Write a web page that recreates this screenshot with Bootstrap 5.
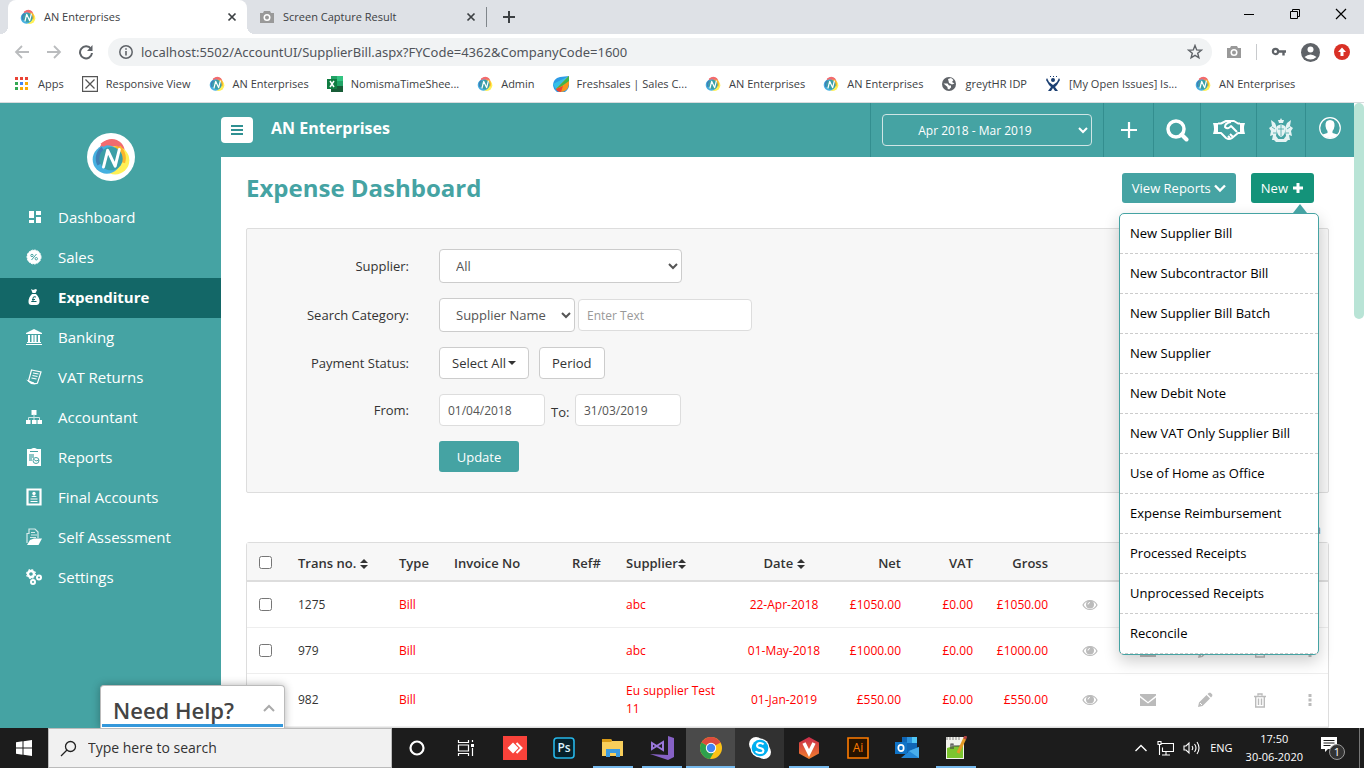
<!DOCTYPE html>
<html lang="en">
<head>
<meta charset="utf-8">
<meta name="viewport" content="width=device-width, initial-scale=1">
<title>AN Enterprises</title>
<link rel="stylesheet" href="https://cdn.jsdelivr.net/npm/bootstrap@5.3.0/dist/css/bootstrap.min.css">
<style>
:root{--teal:#45a3a3;--teal-dark:#136767;--line:#ddd}
body{font:13px/18px "Open Sans","Noto Sans",sans-serif;color:#333;background:#fff}
svg{display:block;flex:none}
.chrome-ui,.taskbar{font-size:11px;color:#3c4043}
.bare{background:none;border:0;padding:0;color:inherit}
/* browser window */
.tabstrip{height:34px;background:#dee1e6;padding-left:8px}
.tab{position:relative;width:239px;height:34px;padding:0 10px 0 12px;gap:8px}
.tab.current{background:#fff;border-radius:8px 8px 0 0}
.tab.current::before,.tab.current::after{content:"";position:absolute;bottom:0;width:8px;height:8px}
.tab.current::before{left:-8px;background:radial-gradient(circle at 0 0,transparent 8px,#fff 8px)}
.tab.current::after{right:-8px;background:radial-gradient(circle at 100% 0,transparent 8px,#fff 8px)}
.tabsep{width:1px;height:20px;background:#80868b}
.win-btns{gap:34px;padding:0 17px 6px 0}
.toolbar{height:36px;padding:0 14px;gap:14px}
.address{height:28px;background:#f1f3f4;border-radius:14px;padding:0 9px 0 11px;gap:8px}
.address input{font-family:"Noto Sans","Open Sans",sans-serif;font-size:13px;color:#50545a;outline:0}
.bookmarks{height:33px;padding:0 14px 4px;gap:18px;border-bottom:1px solid #d9dbde}
.bookmarks a{color:#3c4043;text-decoration:none;gap:8px;white-space:nowrap}
/* application */
.sidebar{width:221px;background:var(--teal)}
.sidebar .brand{margin:30px auto 17px;width:48px}
.sidebar a{height:40px;padding:0 0 2px 26px;gap:16px;color:#fff;font-size:15px;text-decoration:none}
.sidebar a.current{background:var(--teal-dark);font-weight:700}
.topbar{height:54px;background:var(--teal);color:#fff}
.topbar .company{font-size:16px;font-weight:700;padding:0 0 4px 18px;line-height:22px}
.menu-btn{width:32px;height:26px;background:#fff;border-radius:4px}
.topcell{border-left:1px solid #338e8f;align-self:stretch}
.topcell .bare{width:100%;height:100%}
.year{width:210px;height:32px;margin:0 11px;border:1px solid #cfe5e5;border-radius:4px;background:transparent;color:#fff;font-size:12px;text-align:center;padding:0 12px 0 0}
.year option{color:#333}
.scroller{width:10px;background:#fff}
.scroller div{height:216px;background:#b9e4d6;border-radius:5px}
.page{padding:16px 25px 0}
h1{font-size:24px;line-height:30px;font-weight:700;color:var(--teal);margin:0}
.act{height:30px;border:0;border-radius:3px;background:var(--teal);color:#fff;font-size:13px;padding:0 10px;gap:3px}
.act.green{background:#14937a;gap:4px}
.new-menu{width:200px;top:40px;right:-5px;padding:0;font-size:13px;border:1px solid var(--teal);border-radius:5px;box-shadow:0 6px 16px rgba(0,0,0,.2)}
.new-menu::before{content:"";position:absolute;right:11px;top:-10px;border:7px solid transparent;border-top-width:0;border-bottom:9px solid var(--teal)}
.new-menu a{display:block;height:40px;line-height:39px;padding:0 10px;color:#000;text-decoration:none;border-bottom:1px dashed #ccc}
.filter{margin-top:25px;padding:20px 0;background:#f7f7f7;border:1px solid var(--line);border-radius:2px;display:grid;gap:15px}
.filter .lab{width:162px;margin-right:30px;text-align:right}
.filter .to{width:30px;padding:4px 0 0 6px}
.ctl{height:32px;border:1px solid var(--line);border-radius:4px;background:#fff;color:#555;font-size:12px;padding:0 8px}
.ctl::placeholder{color:#999}
select.ctl{height:34px;border-color:#ccc;padding:0 0 0 12px;font-size:13px}
button.ctl{border-color:#ccc;color:#333;font-size:13px;padding:0 12px}
.caret-sm{border:4px solid transparent;border-top-color:#333;border-bottom:0;margin-left:2px}
.date{width:106px}
.above{height:49px;padding:28px 8px 0 0;color:#888;font-size:12px}
.bills{table-layout:fixed;margin:0;border:1px solid var(--line);font-size:12px;border-collapse:separate;border-spacing:0;border-radius:3px 3px 0 0}
.bills th,.bills td{padding:0 10px;vertical-align:middle;border-bottom:1px solid #eee;background:transparent;color:#f00;line-height:18px}
.bills th{height:39px;padding-top:2px;font-weight:600;font-size:13px;background:#f7f7f7;color:#333;border-bottom:2px solid var(--line);white-space:nowrap}
.bills td{height:46px}
.bills .tall td{height:53px}
.bills td:nth-child(2){color:#333}
.bills td svg{margin:auto;color:#bbb}
.bills input{width:13px;height:13px;margin:0 0 0 2px;display:block}
.bills .ic{padding:0}
.bills .ic:last-child{padding-left:8px}
.sort{display:inline-block;vertical-align:-1px}
/* help tab over the page's lower edge */
.help{position:absolute;left:100px;bottom:0;width:185px;height:43px;background:#fff;border:1px solid #bbb;border-bottom:0;border-radius:4px 4px 0 0;box-shadow:0 0 8px rgba(0,0,0,.3);padding:0 1px 1px}
.help button{width:100%;height:41px;border-bottom:3px solid #3498db;padding:9px 8px 0 11px;font-size:22px;line-height:26px;font-weight:600;color:#444}
/* taskbar */
.taskbar{height:40px;background:#1c1c1c;color:#fff}
.start{width:48px}
.finder{width:344px;background:#f1f1f1;border:1px solid #bbb;padding:0 11px;gap:11px}
.finder input{color:#333;font-size:14px;outline:0}
.finder input::placeholder{color:#333;opacity:1}
.app{width:49px;height:40px}
.app.open{background:linear-gradient(#76b9ed,#76b9ed) center bottom/40px 2px no-repeat}
.app.lit{background:linear-gradient(#76b9ed,#76b9ed) center bottom/49px 2px no-repeat #4a4a4a}
.app.dim{background:#313131}
.tray{gap:9px;padding-right:4px}
.clock{line-height:18px;text-align:center}
</style>
</head>
<body class="vh-100 d-flex flex-column overflow-hidden">

<svg width="0" height="0" class="position-absolute" aria-hidden="true">
<defs>
<symbol id="n" viewBox="0 0 48 48"><circle cx="25" cy="18" r="15.500" fill="#f26b6f"/><circle cx="29" cy="28" r="17" fill="#fff056"/><circle cx="19" cy="27" r="17" fill="#45b0e0"/><path d="M30 10.500a17 17 0 0 1 8 20" fill="none" stroke="#fbb62c" stroke-width="6"/><path d="M13 10q10-8 22 0" fill="none" stroke="#f26b6f" stroke-width="5"/><path d="M14 14a15 15 0 0 0-4 19" fill="none" stroke="#3f7fb5" stroke-width="5"/><circle cx="24" cy="26" r="14" fill="#3b9fa6"/><path d="M15 36l5-20 9 19 5-20" fill="none" stroke="#fff" stroke-width="3.600" stroke-linejoin="round" stroke-linecap="round"/></symbol>
<symbol id="cam" viewBox="0 0 16 16"><path d="M1 4h3l1-2h6l1 2h3v10H1z" fill="#999"/><circle cx="8" cy="8.500" r="3.500" fill="#fff"/><circle cx="8" cy="8.500" r="2" fill="#999"/></symbol>
<symbol id="x" viewBox="0 0 10 10"><path d="M1.500 1.500l7 7m0-7l-7 7" stroke="#3c4043" stroke-width="1.700"/></symbol>
<symbol id="chev" viewBox="0 0 12 12"><path d="M1 3.500l5 5 5-5" fill="none" stroke="currentColor" stroke-width="2.400"/></symbol>
<symbol id="eye" viewBox="0 0 16 12"><path d="M1 6c3-6 11-6 14 0-3 6-11 6-14 0z" fill="none" stroke="currentColor" stroke-width="1.200"/><circle cx="8" cy="5.500" r="4" fill="currentColor"/><path d="M6 5.500q0-2 2-2" fill="none" stroke="#fff"/></symbol>
<symbol id="mail" viewBox="0 0 16 14"><path d="M0 1h16v1.500L8 9 0 2.500zM0 4.500l8 6 8-6V13H0z" fill="currentColor"/></symbol>
<symbol id="pen" viewBox="0 0 16 16"><path d="M1 15l1-4.500 7.500-7.500 3.500 3.500L5.500 14zM10.500 2L12 .7h1.500L15.300 2.500V4L14 5.500z" fill="currentColor"/><path d="M3 11l2 2" stroke="#fff"/></symbol>
<symbol id="bin" viewBox="0 0 12 15"><path d="M4 2.500V1h4v1.500M0 3.500h12" fill="none" stroke="currentColor" stroke-width="1.400"/><path d="M1.700 4v10h8.600V4M4.500 5.500V12M7.500 5.500V12" fill="none" stroke="currentColor" stroke-width="1.400"/></symbol>
<symbol id="dots" viewBox="0 0 4 14"><path d="M.5 1h3v3h-3zM.5 5.500h3v3h-3zM.5 10h3v3h-3z" fill="currentColor"/></symbol>
<symbol id="ud" viewBox="0 0 8 10"><path d="M4 0l4 4H0zM0 6h8l-4 4z" fill="#333"/></symbol>
</defs>
</svg>

<header class="chrome-ui">
  <div class="tabstrip d-flex align-items-center">
    <div class="tab current d-flex align-items-center"><svg width="16" height="16"><use href="#n"/></svg><span class="flex-grow-1">AN Enterprises</span><button class="bare" aria-label="Close tab"><svg width="10" height="10"><use href="#x"/></svg></button></div>
    <div class="tab d-flex align-items-center"><svg width="16" height="16"><use href="#cam"/></svg><span class="flex-grow-1">Screen Capture Result</span><button class="bare" aria-label="Close tab"><svg width="10" height="10"><use href="#x"/></svg></button></div>
    <span class="tabsep"></span>
    <button class="bare ms-3" aria-label="New tab"><svg width="12" height="12"><path d="M6 0v12M0 6h12" stroke="#3c4043" stroke-width="2"/></svg></button>
    <div class="win-btns d-flex align-items-center ms-auto">
      <button class="bare" aria-label="Minimize"><svg width="12" height="12"><path d="M1 6.500h10" stroke="#000"/></svg></button>
      <button class="bare" aria-label="Restore"><svg width="12" height="12"><path d="M1.500 3.500h7v7h-7zM3.500 3V1.500h7v7H9" fill="none" stroke="#000"/></svg></button>
      <button class="bare" aria-label="Close"><svg width="12" height="12"><path d="M1 1l10 10M11 1L1 11" stroke="#000" stroke-width="1.200"/></svg></button>
    </div>
  </div>
  <div class="toolbar d-flex align-items-center">
    <div class="d-flex gap-3">
      <button class="bare" aria-label="Back"><svg width="16" height="16"><path d="M15 8H2m6-6L2 8l6 6" fill="none" stroke="#babcbe" stroke-width="1.800"/></svg></button>
      <button class="bare" aria-label="Forward"><svg width="16" height="16"><path d="M1 8h13M8 2l6 6-6 6" fill="none" stroke="#babcbe" stroke-width="1.800"/></svg></button>
      <button class="bare" aria-label="Reload"><svg width="16" height="16"><path d="M13 5a6 6 0 1 0 1 4" fill="none" stroke="#5f6368" stroke-width="2"/><path d="M14.500 1v6H9z" fill="#5f6368"/></svg></button>
    </div>
    <div class="address d-flex align-items-center flex-grow-1">
      <svg width="14" height="14"><circle cx="7" cy="7" r="6.200" fill="none" stroke="#5f6368" stroke-width="1.500"/><path d="M7 6v4.500M7 3.200v1.600" stroke="#5f6368" stroke-width="1.600"/></svg>
      <input class="bare flex-grow-1" aria-label="Address" value="localhost:5502/AccountUI/SupplierBill.aspx?FYCode=4362&amp;CompanyCode=1600">
      <svg width="16" height="16"><path d="M8 1.500l1.700 4.400 4.600.3-3.600 3 1.200 4.600L8 11.300l-3.900 2.500 1.200-4.600-3.600-3 4.600-.3z" fill="none" stroke="#5f6368" stroke-width="1.400"/></svg>
    </div>
    <svg width="16" height="16"><use href="#cam"/></svg>
    <svg width="1" height="16"><path d="M.5 0v16" stroke="#c8cacd" stroke-width="1"/></svg>
    <svg width="16" height="16"><circle cx="4.500" cy="7.500" r="2.600" fill="none" stroke="#5f6368" stroke-width="2.200"/><path d="M7 7.500h8M12.500 8v3.500" stroke="#5f6368" stroke-width="2.400"/></svg>
    <button class="bare" aria-label="Profile"><svg width="19" height="19"><circle cx="9.500" cy="9.500" r="9.500" fill="#5f6368"/><circle cx="9.500" cy="6.500" r="3" fill="#fff"/><path d="M3.500 14q6-5 12 0-6 5-12 0z" fill="#fff"/></svg></button>
    <button class="bare" aria-label="Update browser"><svg width="16" height="16"><circle cx="8" cy="8" r="8" fill="#d93025"/><path d="M8 3.500L12 8H9.500v4h-3V8H4z" fill="#fff"/></svg></button>
  </div>
  <nav class="bookmarks d-flex align-items-center" aria-label="Bookmarks">
    <a href="#" class="d-flex align-items-center"><svg width="16" height="14"><path d="M1 0h3v3H1zM6 0h3v3H6zM11 0h3v3h-3z" fill="#ea4335"/><path d="M1 5h3v3H1zM1 10h3v3H1z" fill="#34a853"/><path d="M6 5h3v3H6z" fill="#4285f4"/><path d="M11 5h3v3h-3zM6 10h3v3H6zM11 10h3v3h-3z" fill="#fbab05"/></svg>Apps</a>
    <a href="#" class="d-flex align-items-center"><svg width="16" height="16"><path d="M.5.500h15v15H.5zM3.500 3.500l9 9m0-9l-9 9" fill="none" stroke="#555" stroke-width="1.300"/></svg>Responsive View</a>
    <a href="#" class="d-flex align-items-center"><svg width="16" height="16"><use href="#n"/></svg>AN Enterprises</a>
    <a href="#" class="d-flex align-items-center"><svg width="16" height="16"><path d="M4 0h12v16H4z" fill="#21a366"/><path d="M10 0h6v5h-6z" fill="#33c481"/><path d="M4 10h12v6H4z" fill="#185c37"/><path d="M0 3h10v10H0z" fill="#107c41"/><path d="M3 5l4 6M7 5l-4 6" stroke="#fff" stroke-width="1.500"/></svg>NomismaTimeShee...</a>
    <a href="#" class="d-flex align-items-center"><svg width="16" height="16"><use href="#n"/></svg>Admin</a>
    <a href="#" class="d-flex align-items-center"><svg width="16" height="16"><path d="M16 0v8a8 8 0 1 1-9-7z" fill="#2e9be6"/><path d="M16 0L3 13l-3-5z" fill="#35c0e8"/><path d="M16 0v8q-1 8-9 8l-4-3z" fill="#f7941d"/><path d="M16 0v5l-7 5-6 3z" fill="#3fb549"/><path d="M3 13l7-3-2 6q-4 0-5-3z" fill="#e43"/></svg>Freshsales | Sales C...</a>
    <a href="#" class="d-flex align-items-center"><svg width="16" height="16"><use href="#n"/></svg>AN Enterprises</a>
    <a href="#" class="d-flex align-items-center"><svg width="16" height="16"><use href="#n"/></svg>AN Enterprises</a>
    <a href="#" class="d-flex align-items-center"><svg width="16" height="16"><circle cx="8" cy="8" r="7" fill="#5f6368"/><path d="M2.500 7.500h4l1.500 2h2v2l-2 2-1.500-1V11zM7 3l3-1 2.500 2-1.500 2 2.500 1.500-2.500 1-3-1.500z" fill="#fff"/></svg>greytHR IDP</a>
    <a href="#" class="d-flex align-items-center"><svg width="16" height="16"><circle cx="8" cy="4" r="2" fill="#1b3f72"/><path d="M2 2l2 4 4 3 4-3 2-4 1 2-3 5-2 2 3 4h-3l-2-3-2 3H3l3-4-2-2-3-5z" fill="#1b3f72"/><path d="M5 .5h1M8 .5h1M11 .5h1" stroke="#1b3f72"/></svg>[My Open Issues] Is...</a>
    <a href="#" class="d-flex align-items-center"><svg width="16" height="16"><use href="#n"/></svg>AN Enterprises</a>
  </nav>
</header>

<div class="d-flex flex-grow-1 overflow-hidden position-relative" style="min-height:0">
  <nav class="sidebar flex-shrink-0" aria-label="Main">
    <svg class="brand" width="48" height="48" viewBox="0 0 48 48"><circle cx="24" cy="24" r="24" fill="#fff"/><svg x="4" y="4" width="40" height="40"><use href="#n"/></svg></svg>
    <a href="#" class="d-flex align-items-center"><svg width="16" height="16"><path d="M3 2h5v7H3zM10 2h5v4h-5zM3 11h5v3H3zM10 8h5v6h-5z" fill="#fff"/></svg>Dashboard</a>
    <a href="#" class="d-flex align-items-center"><svg width="16" height="16"><circle cx="8" cy="8" r="7" fill="#fff" stroke="#fff" stroke-dasharray="2 1"/><path d="M10.500 5l-5 6" stroke="#45a3a3"/><circle cx="6" cy="6.500" r="1.200" fill="none" stroke="#45a3a3"/><circle cx="10.300" cy="9.700" r="1.200" fill="none" stroke="#45a3a3"/></svg>Sales</a>
    <a href="#" class="current d-flex align-items-center" aria-current="page"><svg width="16" height="16"><path d="M5 0l2 1 3-1 1 1-1.500 3h-3zM6 5h4q4 4 3.500 8-.5 3-3 3h-5q-3 0-3-3Q2.500 8 6 5z" fill="#fff"/><path d="M10 8q-3-1-3 1v3.500H5.500h5M6 10.500h3" fill="none" stroke="#136767"/></svg>Expenditure</a>
    <a href="#" class="d-flex align-items-center"><svg width="16" height="16"><path d="M8 0l8 4v1H0V4zM1 14h14v-1H1zM0 15h16v1H0z" fill="#fff"/><path d="M3 6v7M6.500 6v7M9.500 6v7M13 6v7" stroke="#fff" stroke-width="2"/></svg>Banking</a>
    <a href="#" class="d-flex align-items-center"><svg width="16" height="16"><path d="M5.500 1l9.500 2-3.500 11q-2 2-9-2l3-11z" fill="none" stroke="#fff" stroke-width="1.200"/><path d="M0 10.500l8 3 1 2-4-.5z" fill="#fff"/><path d="M7 4l5.500 1M6.500 6.500l5 1M5.500 9l5 1" stroke="#fff" stroke-width="1.200"/></svg>VAT Returns</a>
    <a href="#" class="d-flex align-items-center"><svg width="16" height="16"><path d="M5.500 1h5v5h-5zM0 11h4.500v4H0zM6 11h4.500v4H6zM11.500 11H16v4h-4.500z" fill="#fff"/><path d="M8 5v6M2.500 11V8.500h11V11" fill="none" stroke="#cfe7e7"/></svg>Accountant</a>
    <a href="#" class="d-flex align-items-center"><svg width="16" height="18"><path d="M1 1h4l2-1h2l2 1h4v17H1z" fill="#fff"/><path d="M4 3.500h8" stroke="#45a3a3"/><path d="M3 6h5v4H6v3H3z" fill="#8cc6c6"/><circle cx="10" cy="12.500" r="3" fill="#fff" stroke="#45a3a3"/><path d="M8 11.500l2 1.500 3-1" fill="none" stroke="#45a3a3"/></svg>Reports</a>
    <a href="#" class="d-flex align-items-center"><svg width="16" height="18"><path d="M1.500 1.500h13v15h-13z" fill="none" stroke="#fff" stroke-width="2.200"/><circle cx="8" cy="5.500" r="1.700" fill="#fff"/><path d="M5 9q3-3 6 0zM4.500 10.500h7v1h-7zM4.500 13h7v1h-7z" fill="#fff"/></svg>Final Accounts</a>
    <a href="#" class="d-flex align-items-center"><svg width="16" height="18"><path d="M1 15V5.500h2V1h6l3 3v6" fill="none" stroke="#d6ebeb" stroke-width="1.200"/><path d="M5 4.500h4M5 7h6M4 9.500h6" stroke="#d6ebeb"/><path d="M4 12l4-1.500h8L12.500 17H1z" fill="#fff"/></svg>Self Assessment</a>
    <a href="#" class="d-flex align-items-center"><svg width="16" height="16"><g fill="none" stroke="#fff"><circle cx="5" cy="5" r="3" stroke-width="2.400"/><circle cx="5" cy="5" r="4.600" stroke-dasharray="2 1.600"/><circle cx="13" cy="8.500" r="2" stroke-width="2"/><circle cx="7" cy="13" r="2" stroke-width="2"/></g></svg>Settings</a>
  </nav>

  <main class="flex-grow-1" style="min-width:0">
    <div class="topbar d-flex align-items-center">
      <button class="bare menu-btn d-flex align-items-center justify-content-center" aria-label="Toggle menu"><svg width="12" height="12"><path d="M0 2h12M0 6h12M0 10h12" stroke="#2f9092" stroke-width="2"/></svg></button>
      <span class="company">AN Enterprises</span>
      <div class="topcell ms-auto d-flex align-items-center"><select class="year" aria-label="Financial year"><option>Apr 2018 - Mar 2019</option></select></div>
      <div class="topcell" style="width:50px"><button class="bare d-flex align-items-center justify-content-center" aria-label="Add"><svg width="18" height="18"><path d="M9 1v16M1 9h16" stroke="#fff" stroke-width="2.200"/></svg></button></div>
      <div class="topcell" style="width:47px"><button class="bare d-flex align-items-center justify-content-center" aria-label="Search"><svg width="24" height="24"><circle cx="11" cy="11" r="8" fill="none" stroke="#fff" stroke-width="3.500"/><path d="M16.500 16.500l5 5" stroke="#fff" stroke-width="4" stroke-linecap="round"/></svg></button></div>
      <div class="topcell" style="width:56px"><button class="bare d-flex align-items-center justify-content-center" aria-label="Partners"><svg width="32" height="22"><g fill="none" stroke="#fff" stroke-width="2" stroke-linejoin="round"><path d="M5 4.500h3l5-2.500h8l4 2.500h2M5 14h3l5 5q3 2 6 0l6-5h2"/><path d="M18 3q-6 1-6 5 3 3 6-1l6 6M17 19l-2-2M20 18l-3-3"/></g><path d="M0 4h5v11H0q2-5 0-11zM27 4h5q-2 5 0 11h-5z" fill="#fff"/></svg></button></div>
      <div class="topcell" style="width:49px"><button class="bare d-flex align-items-center justify-content-center" aria-label="Tax office"><svg width="24" height="24" viewBox="0 0 24 24" fill="#e6f3f3"><path d="M12 0l1 2h2l-1 3h-4L9 2h2zM8 8q4-3 8 0v6q-1 4-4 5-3-1-4-5z"/><path d="M2 2l4 3 2 5-1 8 3 4H3l1-5-3 1 1-5-2-3 3-2zM22 2l-4 3-2 5 1 8-3 4h7l-1-5 3 1-1-5 2-3-3-2z"/><path d="M4 21h16l-3 3H7z"/><path d="M9 11h6M12 7v11M3 9l3 2M21 9l-3 2M4 15h3M20 15h-3" stroke="#45a3a3" stroke-width=".8"/></svg></button></div>
      <div class="topcell" style="width:49px"><button class="bare d-flex align-items-center justify-content-center" aria-label="Account"><svg width="22" height="22" class="mb-1"><circle cx="11" cy="11" r="10.300" fill="none" stroke="#fff" stroke-width="1.200"/><path d="M11 3q5 0 4.500 6-.5 4-2 5v2l5 1.500Q15 21 11 21t-7.500-3.500l5-1.500v-2q-1.500-1-2-5Q6 3 11 3z" fill="#fff"/></svg></button></div>
    </div>

    <div class="page">
      <div class="d-flex align-items-center">
        <h1 class="me-auto">Expense Dashboard</h1>
        <button class="act d-flex align-items-center">View Reports <svg width="12" height="12"><use href="#chev"/></svg></button>
        <div class="position-relative" style="margin:0 15px">
          <button class="act green d-flex align-items-center" aria-expanded="true">New <svg width="12" height="12"><path d="M6 1v10M1 6h10" stroke="#fff" stroke-width="3"/></svg></button>
          <div class="dropdown-menu new-menu show">
            <a href="#">New Supplier Bill</a><a href="#">New Subcontractor Bill</a><a href="#">New Supplier Bill Batch</a><a href="#">New Supplier</a><a href="#">New Debit Note</a><a href="#">New VAT Only Supplier Bill</a><a href="#">Use of Home as Office</a><a href="#">Expense Reimbursement</a><a href="#">Processed Receipts</a><a href="#">Unprocessed Receipts</a><a href="#">Reconcile</a>
          </div>
        </div>
      </div>

      <form class="filter">
        <div class="d-flex align-items-center"><label class="lab" for="sup">Supplier:</label><select id="sup" class="ctl" style="width:243px"><option>All</option></select></div>
        <div class="d-flex align-items-center"><label class="lab" for="cat">Search Category:</label><select id="cat" class="ctl" style="width:136px"><option>Supplier Name</option></select><input class="ctl" style="width:174px;margin-left:3px" placeholder="Enter Text" aria-label="Search text"></div>
        <div class="d-flex align-items-center"><label class="lab" for="pay">Payment Status:</label><button type="button" id="pay" class="ctl d-flex align-items-center">Select All<span class="caret-sm"></span></button><button type="button" class="ctl" style="margin-left:10px">Period</button></div>
        <div class="d-flex align-items-center"><label class="lab" for="from">From:</label><input id="from" class="ctl date" value="01/04/2018"><label class="to" for="to">To:</label><input id="to" class="ctl date" value="31/03/2019"></div>
        <div class="d-flex"><span class="lab"></span><button type="button" class="act" style="width:80px;height:31px">Update</button></div>
      </form>

      <div class="above text-end">a</div>

      <table class="table bills w-100">
        <colgroup><col style="width:41px"><col style="width:101px"><col style="width:55px"><col style="width:118px"><col style="width:54px"><col><col style="width:96px"><col style="width:79px"><col style="width:72px"><col style="width:75px"><col style="width:64px"><col style="width:52px"><col style="width:62px"><col style="width:48px"><col style="width:44px"></colgroup>
        <thead><tr><th><input type="checkbox" aria-label="Select all bills"></th><th>Trans no. <svg class="sort" width="8" height="10"><use href="#ud"/></svg></th><th>Type</th><th>Invoice No</th><th>Ref#</th><th>Supplier<svg class="sort" width="8" height="10"><use href="#ud"/></svg></th><th class="text-center">Date <svg class="sort" width="8" height="10"><use href="#ud"/></svg></th><th class="text-end">Net</th><th class="text-end">VAT</th><th class="text-end">Gross</th><th></th><th></th><th></th><th></th><th></th></tr></thead>
        <tbody>
          <tr><td><input type="checkbox" aria-label="Select bill 1275"></td><td>1275</td><td>Bill</td><td></td><td></td><td>abc</td><td class="text-center px-0">22-Apr-2018</td><td class="text-end">£1050.00</td><td class="text-end">£0.00</td><td class="text-end">£1050.00</td><td class="ic"><svg width="16" height="12"><use href="#eye"/></svg></td><td class="ic"><svg width="16" height="14"><use href="#mail"/></svg></td><td class="ic"><svg width="16" height="16"><use href="#pen"/></svg></td><td class="ic"><svg width="12" height="15"><use href="#bin"/></svg></td><td class="ic"><svg width="4" height="14"><use href="#dots"/></svg></td></tr>
          <tr><td><input type="checkbox" aria-label="Select bill 979"></td><td>979</td><td>Bill</td><td></td><td></td><td>abc</td><td class="text-center px-0">01-May-2018</td><td class="text-end">£1000.00</td><td class="text-end">£0.00</td><td class="text-end">£1000.00</td><td class="ic"><svg width="16" height="12"><use href="#eye"/></svg></td><td class="ic"><svg width="16" height="14"><use href="#mail"/></svg></td><td class="ic"><svg width="16" height="16"><use href="#pen"/></svg></td><td class="ic"><svg width="12" height="15"><use href="#bin"/></svg></td><td class="ic"><svg width="4" height="14"><use href="#dots"/></svg></td></tr>
          <tr class="tall"><td></td><td>982</td><td>Bill</td><td></td><td></td><td>Eu supplier Test 11</td><td class="text-center px-0">01-Jan-2019</td><td class="text-end">£550.00</td><td class="text-end">£0.00</td><td class="text-end">£550.00</td><td class="ic"><svg width="16" height="12"><use href="#eye"/></svg></td><td class="ic"><svg width="16" height="14"><use href="#mail"/></svg></td><td class="ic"><svg width="16" height="16"><use href="#pen"/></svg></td><td class="ic"><svg width="12" height="15"><use href="#bin"/></svg></td><td class="ic"><svg width="4" height="14"><use href="#dots"/></svg></td></tr>
        </tbody>
      </table>
    </div>
  </main>
  <div class="scroller flex-shrink-0"><div></div></div>

  <div class="help"><button class="bare d-flex align-items-center justify-content-between">Need Help?<svg width="12" height="8" class="mb-1"><path d="M1 7l5-5 5 5" fill="none" stroke="#aaa" stroke-width="2"/></svg></button></div>
</div>

<footer class="taskbar d-flex align-items-center flex-shrink-0">
  <button class="bare start d-flex align-items-center justify-content-center" aria-label="Start"><svg width="16" height="16"><path d="M0 2.200L6.500 1.300V7.500H0zM7.500 1.200L16 0v7.500H7.500zM0 8.500h6.500v6.200L0 13.800zM7.500 8.500H16V16l-8.500-1.200z" fill="#fff"/></svg></button>
  <div class="finder d-flex align-items-center align-self-stretch"><svg width="17" height="17"><circle cx="10.500" cy="6.500" r="5" fill="none" stroke="#222" stroke-width="1.300"/><path d="M7 10l-6 6" stroke="#222" stroke-width="1.300"/></svg><input class="bare flex-grow-1" placeholder="Type here to search" aria-label="Search Windows"></div>
  <button class="bare app d-flex align-items-center justify-content-center" aria-label="Cortana"><svg width="16" height="16"><circle cx="8" cy="8" r="6.500" fill="none" stroke="#fff" stroke-width="2.200"/></svg></button>
  <button class="bare app d-flex align-items-center justify-content-center" aria-label="Task view"><svg width="18" height="16"><path d="M1.500 0v2.500h10V0M1.500 5h10v6h-10zM1.500 16v-2.500h10V16M15.500 0v2M15.500 8v8" fill="none" stroke="#fff" stroke-width="1.200"/><path d="M14 4h3v3h-3z" fill="#fff"/></svg></button>
  <button class="bare app d-flex align-items-center justify-content-center" aria-label="AnyDesk"><svg width="24" height="24"><path d="M0 0h24v24H0z" fill="#f9423a"/><path d="M10 6.500l5.500 5.500-5.500 5.500L4.500 12z" fill="#fff"/><path d="M13.500 7l5 5-5 5" fill="none" stroke="#fff" stroke-width="2"/></svg></button>
  <button class="bare app d-flex align-items-center justify-content-center" aria-label="Photoshop"><svg width="22" height="22"><rect x="1" y="1" width="20" height="20" rx="3" fill="#06212b" stroke="#26b6e8" stroke-width="1.600"/><text x="11" y="15" text-anchor="middle" font-size="12" font-weight="600" fill="#d8f3ff">Ps</text></svg></button>
  <button class="bare app open d-flex align-items-center justify-content-center" aria-label="File Explorer"><svg width="22" height="20"><path d="M0 1h9l1 2h11v15H0z" fill="#f8ce5b"/><path d="M0 1h9l1 2-1 1H0z" fill="#d89a16"/><path d="M4 11h14v8h-4v-4H8v4H4z" fill="#3b9ae0"/></svg></button>
  <button class="bare app open d-flex align-items-center justify-content-center" aria-label="Visual Studio"><svg width="24" height="24"><path d="M18 0l6 2v19l-6 3-18-6 18 1z" fill="#8661c5"/><path d="M2 7l11 7V6L2 13z" fill="none" stroke="#9b78dc" stroke-width="2"/></svg></button>
  <button class="bare app lit d-flex align-items-center justify-content-center" aria-label="Chrome"><svg width="22" height="22"><circle cx="11" cy="11" r="11" fill="#fbc116"/><path d="M11 11L1.500 5.500A11 11 0 0 1 20.500 5.500z" fill="#dd4b3e"/><path d="M11 11L1.500 5.500A11 11 0 0 0 10 22l4-7z" fill="#2ea04d"/><path d="M11 5.500h9.500" stroke="#dd4b3e"/><circle cx="11" cy="11" r="5.200" fill="#fff"/><circle cx="11" cy="11" r="4.200" fill="#4285f4"/></svg></button>
  <button class="bare app dim d-flex align-items-center justify-content-center" aria-label="Skype"><svg width="22" height="22"><circle cx="7" cy="7" r="7" fill="#fff"/><circle cx="15" cy="15" r="7" fill="#fff"/><circle cx="11" cy="11" r="9.500" fill="#fff"/><circle cx="11" cy="11" r="8.300" fill="#00aff0"/><path d="M14.500 7.500q-1-1.500-3.500-1.500t-3 2.500q0 2 3 2.500t3.500 2.500q0 2.500-3.500 2.500t-4-2" fill="none" stroke="#fff" stroke-width="2"/></svg></button>
  <button class="bare app open d-flex align-items-center justify-content-center" aria-label="Reader"><svg width="22" height="24"><defs><linearGradient id="g" x2="0" y2="1"><stop stop-color="#c92a4b"/><stop offset="1" stop-color="#f3812c"/></linearGradient></defs><path d="M11 1l10 5.500v11L11 23 1 17.500v-11z" fill="url(#g)"/><path d="M6 7l5 10 5-10" fill="none" stroke="#fff" stroke-width="3.500"/></svg></button>
  <button class="bare app d-flex align-items-center justify-content-center" aria-label="Illustrator"><svg width="22" height="22"><path d="M1 1h20v20H1z" fill="#261300" stroke="#ff7c00" stroke-width="1.600"/><text x="11" y="15" text-anchor="middle" font-size="12" fill="#ff7c00">Ai</text></svg></button>
  <button class="bare app d-flex align-items-center justify-content-center" aria-label="Outlook"><svg width="24" height="22"><path d="M7 0h15v15H7z" fill="#1066b5"/><path d="M12 0h5v6h-5z" fill="#2a91dc"/><path d="M17 0h5v6h-5z" fill="#50c7f5"/><path d="M6 21l8-7 10-4v11z" fill="#2387d6"/><path d="M24 10v11L14 14z" fill="#48adea"/><path d="M0 5h12v12H0z" fill="#0f73c7"/><ellipse cx="6" cy="11" rx="2.700" ry="3.200" fill="none" stroke="#fff" stroke-width="1.700"/></svg></button>
  <button class="bare app open d-flex align-items-center justify-content-center" aria-label="Notepad"><svg width="22" height="24"><path d="M1 1h18v22H1z" fill="#f4f4ee"/><path d="M2 12q8-3 16-2v12H2z" fill="#7cc52f"/><path d="M2 1v3M5 1v3M8 1v3M11 1v3M14 1v3" stroke="#888"/><path d="M6 13V8h2v5M9 10h6" fill="none" stroke="#444" stroke-width="1.200"/><path d="M20 2l-7 15" stroke="#e39a25" stroke-width="3"/><path d="M21 0l-1.500 3" stroke="#b04141" stroke-width="3"/></svg></button>
  <div class="tray ms-auto d-flex align-items-center">
    <svg width="14" height="8"><path d="M1.500 7L7 1.500 12.500 7" fill="none" stroke="#fff" stroke-width="1.400"/></svg>
    <svg width="17" height="16"><path d="M4 3.500h12.500v8h-11v-4M9 12v3M5 15h8M1 1.500h3v3H1zM2.500 5v10" fill="none" stroke="#fff" stroke-width="1.100"/></svg>
    <svg width="18" height="14"><path d="M1 5h2l3-3v10L3 9H1zM9 5q1.500 2 0 4M11.500 3q3 4 0 8M14 1q4 6 0 12" fill="none" stroke="#fff" stroke-width="1.100"/></svg>
    <span>ENG</span>
    <div class="clock ms-1">17:50<br>30-06-2020</div>
    <svg width="26" height="26" class="ms-2"><path d="M1 2h16v12H8l-3 3v-3H1z" fill="#fff"/><path d="M3.500 5.500h11M3.500 8h11M3.500 10.500h7" stroke="#1c1c1c"/><circle cx="17" cy="17" r="7.500" fill="#333" stroke="#999"/><text x="17" y="21" text-anchor="middle" font-size="11" fill="#fff">1</text></svg>
    <svg width="1" height="40" class="ms-1"><path d="M.5 0v40" stroke="#777"/></svg>
  </div>
</footer>
<script src="https://cdn.jsdelivr.net/npm/bootstrap@5.3.0/dist/js/bootstrap.bundle.min.js"></script>
</body>
</html>
